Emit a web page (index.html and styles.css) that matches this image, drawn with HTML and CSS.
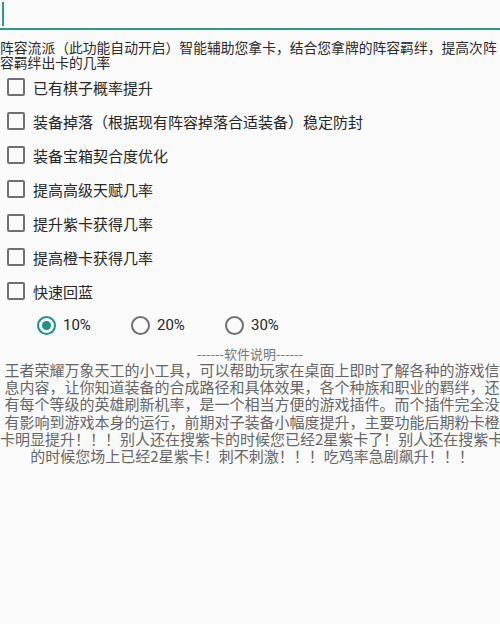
FILE: index.html
```html
<!DOCTYPE html>
<html lang="zh-CN">
<head>
<meta charset="utf-8">
<link rel="stylesheet" href="styles.css">
</head>
<body>
<div class="field"><span class="cursor"></span></div>
<p class="intro">阵容流派（此功能自动开启）智能辅助您拿卡，结合您拿牌的阵容羁绊，提高次阵容羁绊出卡的几率</p>
<ul class="options">
  <li class="option"><span class="box"></span><span>已有棋子概率提升</span></li>
  <li class="option"><span class="box"></span><span>装备掉落（根据现有阵容掉落合适装备）稳定防封</span></li>
  <li class="option"><span class="box"></span><span>装备宝箱契合度优化</span></li>
  <li class="option"><span class="box"></span><span>提高高级天赋几率</span></li>
  <li class="option"><span class="box"></span><span>提升紫卡获得几率</span></li>
  <li class="option"><span class="box"></span><span>提高橙卡获得几率</span></li>
  <li class="option"><span class="box"></span><span>快速回蓝</span></li>
</ul>
<div class="radios">
  <div class="radio"><span class="circle checked"></span><span>10%</span></div>
  <div class="radio"><span class="circle"></span><span>20%</span></div>
  <div class="radio"><span class="circle"></span><span>30%</span></div>
</div>
<div class="title">------软件说明------</div>
<div class="desc">
  <span class="line">王者荣耀万象天工的小工具，可以帮助玩家在桌面上即时了解各种的游戏信</span>
  <span class="line">息内容，让你知道装备的合成路径和具体效果，各个种族和职业的羁绊，还</span>
  <span class="line">有每个等级的英雄刷新机率，是一个相当方便的游戏插件。而个插件完全没</span>
  <span class="line">有影响到游戏本身的运行，前期对子装备小幅度提升，主要功能后期粉卡橙</span>
  <span class="line shift">卡明显提升！！！别人还在搜紫卡的时候您已经2星紫卡了！别人还在搜紫卡</span>
  <span class="line">的时候您场上已经2星紫卡！刺不刺激！！！吃鸡率急剧飙升！！！</span>
</div>
</body>
</html>
```
FILE: styles.css
```css
html, body {
  margin: 0;
  padding: 0;
}
body {
  width: 500px;
  height: 624px;
  overflow: hidden;
  background: #fafafa;
  font-family: "Noto Sans CJK SC", "Noto Sans", sans-serif;
  color: #222;
}
.field {
  height: 26px;
  padding-top: 2px;
  padding-left: 2px;
  border-bottom: 2px solid #2f9a88;
  display: flex;
  align-items: flex-start;
}
.cursor {
  width: 2px;
  height: 24px;
  background: #2f9a88;
}
.intro {
  margin: 10px 0 0 0;
  font-size: 13.8px;
  line-height: 14.5px;
  color: #2a2a2a;
}
.options {
  list-style: none;
  margin: 1px 0 0 0;
  padding: 0;
}
.option {
  height: 34px;
  display: flex;
  align-items: center;
  padding-left: 7px;
  gap: 8px;
  font-size: 15px;
  color: #262626;
}
.box {
  width: 14px;
  height: 14px;
  border: 2px solid #707070;
  border-radius: 2px;
  flex: none;
}
.radios {
  height: 34px;
  display: flex;
  align-items: center;
  padding-left: 37px;
}
.radio {
  width: 94px;
  display: flex;
  align-items: center;
  gap: 7px;
  font-size: 15px;
  color: #262626;
  font-family: Roboto, "Noto Sans", sans-serif;
}
.circle {
  width: 15px;
  height: 15px;
  border: 2px solid #707070;
  border-radius: 50%;
  box-sizing: content-box;
  display: flex;
  align-items: center;
  justify-content: center;
  flex: none;
}
.circle.checked {
  border-color: #1e937f;
}
.circle.checked::after {
  content: "";
  width: 9px;
  height: 9px;
  border-radius: 50%;
  background: #1e937f;
}
.title {
  text-align: center;
  font-size: 13px;
  line-height: 17px;
  color: #777;
  margin-top: 3px;
}
.desc {
  padding-left: 4px;
  text-align: center;
  font-size: 15px;
  line-height: 17.2px;
  color: #666;
  margin-top: -1px;
}
.line {
  display: block;
  white-space: nowrap;
}
.line.shift {
  margin-left: -4px;
}
```
